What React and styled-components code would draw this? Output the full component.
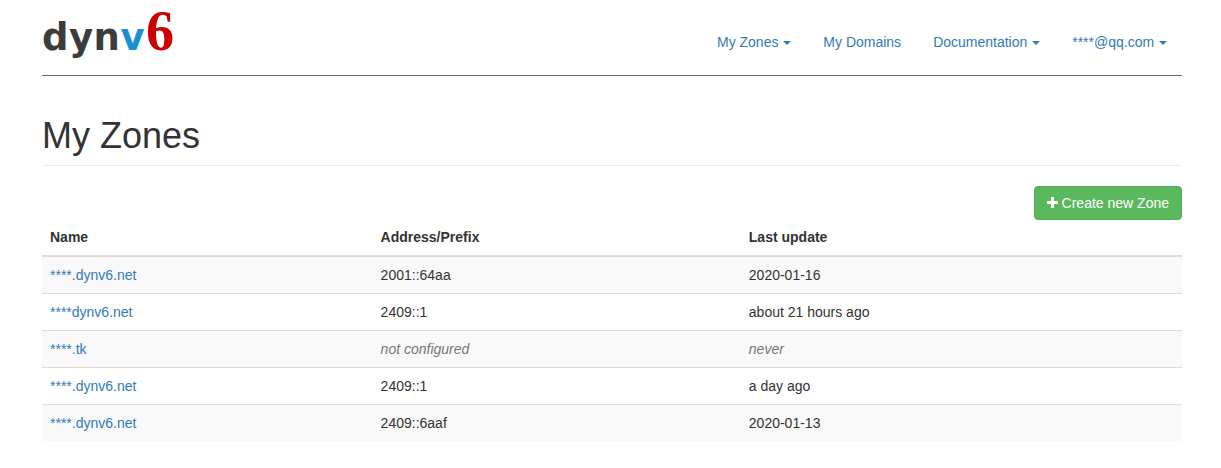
import React from 'react';
import styled, { createGlobalStyle } from 'styled-components';

const Global = createGlobalStyle`
  body { margin: 0; font-family: "Liberation Sans", Arial, sans-serif; font-size: 14px; color: #333; background: #fff; }
`;

const Container = styled.div`
  width: 1140px;
  margin: 0 0 0 42px;
`;

const Navbar = styled.div`
  height: 75px;
  border-bottom: 1px solid #666;
  display: flex;
  align-items: center;
  justify-content: space-between;
`;

const Logo = styled.div`
  display: flex;
  align-items: baseline;
  margin-top: -14px;
  font-family: "DejaVu Sans", sans-serif;
  font-weight: bold;
  font-size: 37px;
  letter-spacing: 0.5px;
  color: #3c3c3c;
`;

const Blue = styled.span`color: #1a8fd6;`;
const Six = styled.span`
  font-family: "Liberation Serif", serif;
  font-weight: bold;
  font-size: 56px;
  color: #cc0000;
  margin-left: 1px;
`;

const Nav = styled.div`
  display: flex;
  margin-top: 8px;
  margin-right: 15px;
`;

const NavItem = styled.a`
  color: #337ab7;
  padding: 0 16px;
  font-size: 14px;
  &:last-child { padding-right: 0; }
`;

const Caret = styled.span`
  display: inline-block;
  width: 0; height: 0;
  margin-left: 1px;
  vertical-align: middle;
  border-top: 4px solid;
  border-left: 4px solid transparent;
  border-right: 4px solid transparent;
`;

const Header = styled.h1`
  font-size: 36px;
  font-weight: 500;
  margin: 40px 0 20px;
  padding-bottom: 9px;
  border-bottom: 1px solid #eee;
  line-height: 1.1;
`;

const Toolbar = styled.div`
  display: flex;
  justify-content: flex-end;
`;

const Button = styled.button`
  background: #5cb85c;
  border: 1px solid #4cae4c;
  border-radius: 4px;
  color: #fff;
  font-family: inherit;
  font-size: 14px;
  padding: 6px 12px;
  height: 34px;
  display: flex;
  align-items: center;
  gap: 4px;
`;

const Table = styled.table`
  width: 100%;
  border-collapse: collapse;
  margin-top: -1px;
  th, td { text-align: left; padding: 8px; line-height: 20px; }
  th { border-bottom: 2px solid #ddd; font-weight: bold; }
  td { border-top: 1px solid #ddd; }
  tbody tr:nth-child(odd) { background: #f9f9f9; }
`;

const Link = styled.a`color: #337ab7;`;
const Muted = styled.span`font-style: italic; color: #777;`;

const rows = [
  ['****.dynv6.net', '2001::64aa', '2020-01-16'],
  ['****dynv6.net', '2409::1', 'about 21 hours ago'],
  ['****.tk', null, null],
  ['****.dynv6.net', '2409::1', 'a day ago'],
  ['****.dynv6.net', '2409::6aaf', '2020-01-13'],
];

export default function App() {
  return (
    <Container>
      <Global />
      <Navbar>
        <Logo>dyn<Blue>v</Blue><Six>6</Six></Logo>
        <Nav>
          <NavItem>My Zones <Caret /></NavItem>
          <NavItem>My Domains</NavItem>
          <NavItem>Documentation <Caret /></NavItem>
          <NavItem>****@qq.com <Caret /></NavItem>
        </Nav>
      </Navbar>
      <Header>My Zones</Header>
      <Toolbar>
        <Button>
          <svg width="11" height="11" viewBox="0 0 11 11"><path d="M4 0h3v4h4v3H7v4H4V7H0V4h4z" fill="#fff" /></svg>
          Create new Zone
        </Button>
      </Toolbar>
      <Table>
        <thead>
          <tr>
            <th style={{ width: '29%' }}>Name</th>
            <th style={{ width: '32.3%' }}>Address/Prefix</th>
            <th>Last update</th>
          </tr>
        </thead>
        <tbody>
          {rows.map((r, i) => (
            <tr key={i}>
              <td><Link>{r[0]}</Link></td>
              <td>{r[1] || <Muted>not configured</Muted>}</td>
              <td>{r[2] || <Muted>never</Muted>}</td>
            </tr>
          ))}
        </tbody>
      </Table>
    </Container>
  );
}
